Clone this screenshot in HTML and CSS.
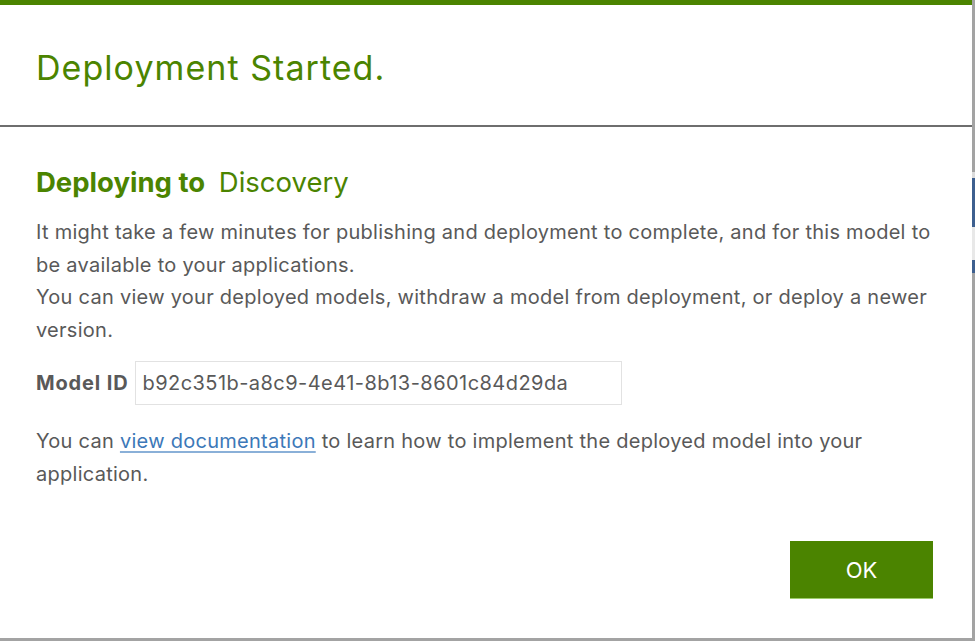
FILE: index.html
```html
<!DOCTYPE html>
<html lang="en">
<head>
<meta charset="utf-8">
<title>Deployment Started</title>
<link rel="stylesheet" href="styles.css">
</head>
<body>
<div class="screen">
  <div class="row">
    <div class="dialog">
      <header class="dialog-header">
        <h1 class="title">Deployment Started.</h1>
      </header>
      <main class="dialog-body">
        <h2 class="subtitle"><strong>Deploying to</strong> Discovery</h2>
        <p class="text">It might take a few minutes for publishing and deployment to complete, and for this model to be available to your applications.<br>You can view your deployed models, withdraw a model from deployment, or deploy a newer version.</p>
        <div class="model-row">
          <span class="model-label">Model ID</span>
          <span class="model-box">b92c351b-a8c9-4e41-8b13-8601c84d29da</span>
        </div>
        <p class="text doc">You can <a class="link" href="#">view documentation</a> to learn how to implement the deployed model into your application.</p>
        <div class="actions">
          <button class="ok-btn" type="button">OK</button>
        </div>
      </main>
    </div>
    <div class="side">
      <div class="side-gap"></div>
      <div class="side-line"></div>
      <div class="side-blue"></div>
      <div class="side-gap2"></div>
      <div class="side-blue small"></div>
    </div>
  </div>
  <div class="bottom"></div>
</div>
</body>
</html>
```
FILE: styles.css
```css
* { box-sizing: border-box; }
html, body { margin: 0; padding: 0; }
body {
  width: 975px;
  height: 641px;
  overflow: hidden;
  background: #a3a3a3;
  font-family: "Inter", "Liberation Sans", Arial, sans-serif;
}
.screen { display: flex; flex-direction: column; width: 975px; height: 641px; }
.row { display: flex; height: 638px; }
.dialog {
  width: 972px;
  height: 638px;
  background: #ffffff;
  border-top: 5px solid #4b8400;
  display: flex;
  flex-direction: column;
}
.dialog-header {
  height: 122px;
  border-bottom: 2px solid #6e6e6e;
  display: flex;
  align-items: center;
  padding: 5px 36px 0;
}
.title {
  margin: 0;
  font-size: 34px;
  font-weight: 400;
  color: #4b8400;
  line-height: 1;
  letter-spacing: 1.05px;
}
.dialog-body {
  flex: 1;
  display: flex;
  flex-direction: column;
  padding: 40px 39px 39px 36px;
}
.subtitle {
  margin: 0;
  font-size: 27.5px;
  line-height: 31px;
  font-weight: 400;
  color: #4b8400;
}
.subtitle strong { font-weight: 700; margin-right: 6px; }
.text {
  margin: 18px 0 0;
  font-size: 20px;
  line-height: 32.5px;
  letter-spacing: 0.27px;
  color: #595959;
}
.model-row {
  margin-top: 15px;
  display: flex;
  align-items: center;
  gap: 7px;
}
.model-label {
  font-size: 20px;
  font-weight: 700;
  letter-spacing: 0.85px;
  color: #595959;
}
.model-box {
  width: 487px;
  height: 44px;
  border: 1px solid #e2e2e2;
  display: flex;
  align-items: center;
  padding-left: 6px;
  font-size: 20px;
  letter-spacing: 0.45px;
  color: #595959;
}
.text.doc { margin-top: 20px; }
.link { color: #3c78b8; text-decoration: underline; text-decoration-color: #8ab0d8; text-underline-offset: 3px; }
.actions { margin-top: auto; display: flex; justify-content: flex-end; }
.ok-btn {
  width: 143px;
  height: 58px;
  border: 0;
  border-bottom: 1px solid #9ccc6a;
  background: #4b8400;
  color: #ffffff;
  font-family: "Inter", "Liberation Sans", Arial, sans-serif;
  font-size: 22px;
  padding: 0;
}
.side {
  width: 3px;
  display: flex;
  flex-direction: column;
  background: #a3a3a3;
}
.side-gap { height: 172px; }
.side-line { height: 6px; background: #dcdcdc; }
.side-blue { height: 49px; background: #3d5f8f; }
.side-gap2 { height: 33px; background: #e8e8e8; }
.side-blue.small { height: 13px; }
.bottom { height: 3px; background: #a3a3a3; }
```
